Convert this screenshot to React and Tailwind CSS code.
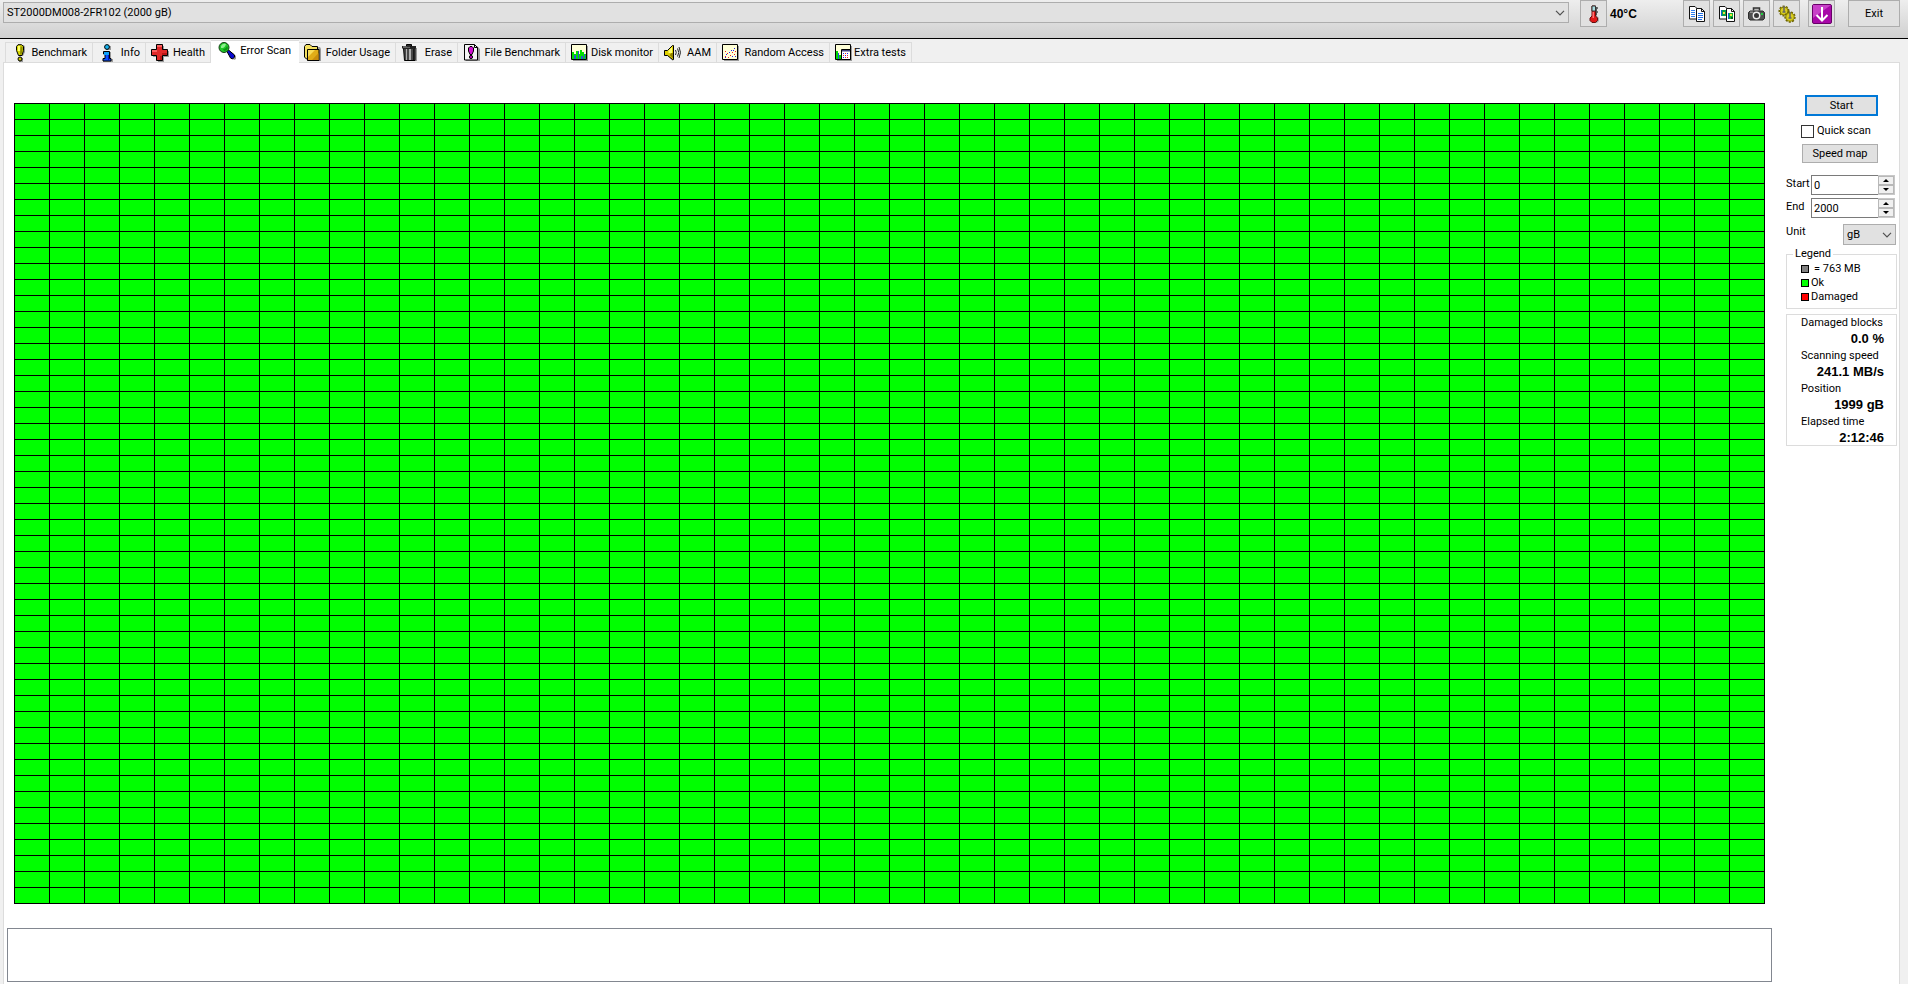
import React, { useState } from "react";

const COLUMNS = 50;
const ROWS = 50;
const BLOCKS = Array.from({ length: COLUMNS * ROWS }, (_, i) => i);

function Icon({ children, className = "h-[18px] w-[18px]" }) {
  return (
    <svg viewBox="0 0 18 18" aria-hidden="true" className={`${className} shrink-0`}>
      {children}
    </svg>
  );
}

function BenchmarkIcon() {
  return (
    <Icon>
      <path d="M6 3 8 1h4l1 2v5l-2 4H8L6 8z M7 14h4v4H7z" fill="#9a9a9a" />
      <path d="M4.500 2.500 6 .7h3.500L11.500 2.500v4L10 11.500H6.500L4.500 6.500z" fill="#d8d800" stroke="#000" />
      <path d="M6 2h2v5H6z" fill="#ffff70" />
      <path d="M8.500 2.500h2v4l-1 4H8z" fill="#8c8c00" />
      <circle cx="8" cy="15" r="2" fill="#c8c800" stroke="#000" />
    </Icon>
  );
}

function InfoIcon() {
  return (
    <Icon>
      <path d="M6 8h7v7h2v3H5v-2h2v-6H6z M8 2h5v4H8z" fill="#9a9a9a" />
      <circle cx="9" cy="3" r="2.400" fill="#18b4f0" stroke="#000" />
      <path d="M5.500 7.500h6v7h1.500v2.500H5v-2.500h2v-4.500H5.500z" fill="#0a50ff" stroke="#000" />
      <path d="M6 8h5v3H6z" fill="#10a0f8" />
      <path d="M10 11h1v5h-1z" fill="#0018c0" />
    </Icon>
  );
}

function HealthIcon() {
  return (
    <Icon>
      <path d="M7 2h6v5h5v6h-5v5H7v-5H2V7h5z" fill="#999" />
      <path d="M5.500.5h6v5h5v6h-5v5h-6v-5h-5v-6h5z" fill="#e02828" stroke="#000" />
      <path d="M6 1h5v2H6z M1 6h5v2H1z" fill="#f86060" />
      <path d="M9 12h2v4H9z M11 9h5v2h-5z" fill="#b81414" />
    </Icon>
  );
}

function ScanIcon() {
  return (
    <Icon>
      <path d="m9 10 2-2 7 6v3l-2 1z" fill="#999" />
      <path d="m9 9.500 1.500-1.500 6 5v2l-2 2-2-1z" fill="#0808d0" stroke="#000" />
      <circle cx="6" cy="5.500" r="5" fill="#20c828" stroke="#143c14" />
      <path d="M3 4q1-2.500 4-2.500l1 1Q7 5 5 6H3z" fill="#8cf08c" />
      <path d="M5 7q3 0 4-3l1 2q-1 3-4 3z" fill="#0c9414" />
    </Icon>
  );
}

function FolderIcon() {
  return (
    <Icon>
      <path d="M3 3h13l1 2v12H3z" fill="#999" />
      <path d="M.5 2.500 2 .5h4l2 2h5.500v12.500H2.500L.5 13z" fill="#f4e060" stroke="#000" />
      <path d="M3.500 5.500h11.500v11H3.500z" fill="#e0ac18" stroke="#000" />
      <path d="M4 6h7L4 13z" fill="#f8dc58" />
      <path d="M14.500 9v7H8z" fill="#c88c0c" />
    </Icon>
  );
}

function TrashIcon() {
  return (
    <Icon>
      <path d="M5 4h11v13H5z" fill="#999" />
      <path d="M2.500 4h11.500v12.500H3.500z" fill="#484848" stroke="#000" />
      <path d="M5 5h1v11H5z M8 5h2v11H8z" fill="#b0b0b0" />
      <path d="M12 5h1v11h-1z" fill="#181818" />
      <path d="M1 2h14v2.500H1z" fill="#222" />
      <path d="M2 2.500h7v1H2z" fill="#a0a0a0" />
      <path d="M5.500.5h5V2h-5z" fill="#555" stroke="#000" />
    </Icon>
  );
}

function FileBenchmarkIcon() {
  return (
    <Icon>
      <path d="M2 2h12l3 3v12H3z" fill="#999" />
      <path d="M1.500.5h10l3 3v12.500h-13z" fill="#f4f4f4" stroke="#000" />
      <path d="M11.500.5v3h3" fill="none" stroke="#000" />
      <path d="M5.500 4 7 2.500h2L10.500 4v3L9 10.500H7L5.500 7z" fill="#d010d0" stroke="#000" />
      <circle cx="8" cy="13" r="1.600" fill="#c000c0" stroke="#000" />
    </Icon>
  );
}

function MonitorIcon() {
  return (
    <Icon>
      <path d="M2 2h15v15H2z" fill="#999" />
      <path d="M.5.5h15v15H.5z" fill="#ffffd8" stroke="#000" />
      <path d="M1 8h2v2h2V7h3v3h1V6h2v2h2v2h2v5H1z" fill="#00e000" />
      <path d="M3 11h2v4H3z M7 7h1v8H7z M10 12h2v3h-2z M13 10h1v5h-1z" fill="#2858d0" />
    </Icon>
  );
}

function SpeakerIcon() {
  return (
    <Icon>
      <path d="M5 7h5v6l-1 4-5-5H2v-3z" fill="#999" />
      <path d="M.5 6.500h3L8.500 1.500h1v14h-1l-5-4h-3z" fill="#e0d000" stroke="#000" />
      <path d="M4.500 6.500 8 3v6H4.500z" fill="#ffff70" />
      <path d="M7.500 9H9v5.500L5.500 11z" fill="#908000" />
      <path d="M11.500 6q1.500 2.500 0 5M13.500 4.500q2.500 4 0 8M15 3q3 5.500 0 11" fill="none" stroke="#222" />
    </Icon>
  );
}

function RandomIcon() {
  return (
    <Icon>
      <path d="M2 2h15v15H2z" fill="#999" />
      <path d="M.5.5h15v15H.5z" fill="#ffffd8" stroke="#000" />
      <path
        d="M3 12h1v1H3z M5 9h1v1H5z M8 11h1v1H8z M10 8h1v1h-1z M12 10h1v1h-1z M6 13h1v1H6z M13 7h1v1h-1z M3 7h1v1H3z"
        fill="#f02020"
      />
      <path
        d="M4 10h1v1H4z M7 8h1v1H7z M9 6h1v1H9z M12 4h1v1h-1z M10 12h1v1h-1z M3 13h1v1H3z M13 12h1v1h-1z M11 6h1v1h-1z"
        fill="#2020f0"
      />
    </Icon>
  );
}

function ExtraIcon() {
  return (
    <Icon>
      <path d="M2 2h15v15H2z" fill="#999" />
      <path d="M.5.5h15v15H.5z" fill="#ffffd8" stroke="#000" />
      <path d="M1 7h2v8H1z M4 11h2v4H4z" fill="#00d800" />
      <path d="M3 9h1v6H3z" fill="#2050e0" />
      <path d="M6.500 5.500h9v10h-9z" fill="#fff" stroke="#000" />
      <path d="M7 6h8v1.500H7z" fill="#404080" />
      <path d="M8 9h1v1H8z M12 9h1v1h-1z M10 11h1v1h-1z M8 13h1v1H8z" fill="#2020f0" />
      <path d="M10 9h1v1h-1z M8 11h1v1H8z M12 11h1v1h-1z M10 13h1v1h-1z M12 13h1v1h-1z" fill="#f02020" />
    </Icon>
  );
}

function ThermometerIcon() {
  return (
    <Icon>
      <path d="M9 2h3v9l2 2v3l-2 2H8z" fill="#aaa" />
      <path d="M7 1h3.500v10l2 2v2.500l-2 2H7l-2-2V13l2-2z" fill="#e01818" stroke="#601010" />
      <path d="M7 1h3.500v5H7z" fill="#a8dce0" stroke="#333" />
      <path d="M7.500 7H9v6H7.500z" fill="#ff7070" />
      <path d="M11 3h2M11 5h1M11 7h2M11 9h1" stroke="#000" />
    </Icon>
  );
}

function CopyTextIcon() {
  return (
    <Icon>
      <path d="M1.500 1.500h5.500l2 2v10.500H1.500z" fill="#fff" stroke="#111" />
      <path d="M3 5.500h4M3 7.500h4M3 9.500h4M3 11.500h4" stroke="#3080f0" />
      <path d="M8.500 3.500h5l3 3v10h-8z" fill="#fff" stroke="#111" />
      <path d="M13.500 3.500v3h3" fill="none" stroke="#111" />
      <path d="M10 8.500h5M10 10.500h5M10 12.500h5M10 14.500h4" stroke="#2070e8" />
    </Icon>
  );
}

function CopyImageIcon() {
  return (
    <Icon>
      <path d="M1.500 1.500h5.500l2 2v10.500H1.500z" fill="#fff" stroke="#111" />
      <path d="M3 5h5v6H3z" fill="#08a048" />
      <path d="M3 5h1v6H3z" fill="#1060d0" />
      <path d="M5 7h2v2H5z" fill="#f0e040" />
      <path d="M8.500 3.500h5l3 3v10h-8z" fill="#fff" stroke="#111" />
      <path d="M13.500 3.500v3h3" fill="none" stroke="#111" />
      <path d="M10 8h5v6h-5z" fill="#10b830" />
      <path d="M10 8h1v6h-1z" fill="#1060d0" />
      <path d="M12 9h2v2h-2z" fill="#f0e040" />
      <path d="M13 12h2v2h-2z" fill="#086020" />
    </Icon>
  );
}

function CameraIcon() {
  return (
    <Icon>
      <path d="M5.500 5.500V3h6v2.500" fill="#bbb" stroke="#333" strokeWidth="1.500" />
      <path d="M2 6h13l1.500 1.500v6L15 15H2L.5 13.500v-6z" fill="#505050" stroke="#2c2c2c" />
      <path d="M2 6.500h3V8H2z" fill="#909090" />
      <circle cx="8.500" cy="10.500" r="3.200" fill="#383838" stroke="#eee" strokeWidth="1.400" />
      <path d="M13 8h2v2h-2z" fill="#20d040" />
    </Icon>
  );
}

function GearsIcon() {
  return (
    <Icon>
      <circle cx="6" cy="6" r="4.500" fill="none" stroke="#6c6400" strokeWidth="2" strokeDasharray="2 1.200" />
      <circle cx="6" cy="6" r="4" fill="#d8cc20" stroke="#8c8200" />
      <path d="M6 1v5.500M4.500 7h3" fill="none" stroke="#666" strokeWidth="1.500" />
      <circle cx="12" cy="12" r="4.700" fill="none" stroke="#6c6400" strokeWidth="2" strokeDasharray="2 1.200" />
      <circle cx="12" cy="12" r="4.200" fill="#d8cc20" stroke="#8c8200" />
      <path d="M12 7v5.500M10.500 13h3" fill="none" stroke="#666" strokeWidth="1.500" />
    </Icon>
  );
}

function DownIcon() {
  return (
    <svg viewBox="0 0 20 20" aria-hidden="true" className="h-5 w-5 shrink-0">
      <rect x=".5" y=".5" width="19" height="19" rx="1.500" fill="#a808a8" stroke="#680068" />
      <path d="M1 1h18L1 14z" fill="#c840c8" />
      <path d="M10 3v13M4.500 11l5.500 5.500 5.500-5.500" fill="none" stroke="#fff" strokeWidth="2" />
    </svg>
  );
}

function Chevron() {
  return (
    <svg
      viewBox="0 0 10 6"
      aria-hidden="true"
      className="pointer-events-none absolute top-1/2 right-1 h-[6px] w-[10px] -translate-y-1/2"
    >
      <path d="m1 .8 4 4 4-4" fill="none" stroke="#505050" strokeWidth="1.200" />
    </svg>
  );
}

const TABS = [
  { name: "Benchmark", icon: BenchmarkIcon, width: "w-[88px]" },
  { name: "Info", icon: InfoIcon, width: "w-[53px]" },
  { name: "Health", icon: HealthIcon, width: "w-[65px]" },
  { name: "Error Scan", icon: ScanIcon, width: "w-[88px]" },
  { name: "Folder Usage", icon: FolderIcon, width: "w-[97px]" },
  { name: "Erase", icon: TrashIcon, width: "w-[62px]" },
  { name: "File Benchmark", icon: FileBenchmarkIcon, width: "w-[108px]" },
  { name: "Disk monitor", icon: MonitorIcon, width: "w-[93px]" },
  { name: "AAM", icon: SpeakerIcon, width: "w-[58px]" },
  { name: "Random Access", icon: RandomIcon, width: "w-[113px]" },
  { name: "Extra tests", icon: ExtraIcon, width: "w-[82px]" },
];

const BUTTON = "flex items-center justify-center border border-[#adadad] bg-[#e1e1e1]";

function ToolButton({ label, children }) {
  return (
    <button type="button" aria-label={label} className={`${BUTTON} h-[27px] w-[27px] shrink-0`}>
      {children}
    </button>
  );
}

function SpinButton({ label, path, onClick }) {
  return (
    <button
      type="button"
      aria-label={label}
      onClick={onClick}
      className="flex items-center justify-center border border-[#b8b8b8] bg-[#f0f0f0]"
    >
      <svg viewBox="0 0 6 3" aria-hidden="true" className="h-[3px] w-[6px]">
        <path d={path} />
      </svg>
    </button>
  );
}

function Spinner({ id, label, value, onChange }) {
  return (
    <div className="flex items-center justify-between pr-[2px]">
      <label htmlFor={id} className="pb-[2px]">
        {label}
      </label>
      <div className="flex h-5 w-[84px] border border-[#c8c8c8] bg-white">
        <input
          id={id}
          type="text"
          inputMode="numeric"
          value={value}
          onChange={(e) => onChange(Number(e.target.value) || 0)}
          className="-my-px -ml-px h-5 w-[67px] border border-r-0 border-[#7a7a7a] pl-[2px] outline-none"
        />
        <div className="grid flex-1 grid-rows-2">
          <SpinButton label={`Increase ${label}`} path="M3 0 6 3H0z" onClick={() => onChange(value + 1)} />
          <SpinButton label={`Decrease ${label}`} path="M0 0h6L3 3z" onClick={() => onChange(Math.max(0, value - 1))} />
        </div>
      </div>
    </div>
  );
}

function Stat({ name, value }) {
  return (
    <div>
      <dt className="leading-4">{name}</dt>
      <dd className="pr-3 text-right font-['Liberation_Sans',sans-serif] text-[13px] leading-[15px] font-bold">
        {value}
      </dd>
    </div>
  );
}

export default function App() {
  const [tab, setTab] = useState("Error Scan");
  const [start, setStart] = useState(0);
  const [end, setEnd] = useState(2000);

  return (
    <div className="flex min-h-screen flex-col bg-[#f0f0f0] font-[Roboto,sans-serif] text-[11px] leading-4 text-black">
      <header className="flex h-[39px] shrink-0 items-start border-b border-black bg-linear-to-b from-[#eeeeee] to-[#d0d0d0] pr-2 pl-[3px]">
        <div className="relative mt-[2px] flex-1">
          <select
            aria-label="Drive"
            className="block h-[21px] w-full appearance-none border border-[#adadad] bg-[#e1e1e1] pl-[3px] outline-none"
          >
            <option>ST2000DM008-2FR102 (2000 gB)</option>
          </select>
          <Chevron />
        </div>
        <div className="ml-[11px] flex w-[103px] items-center gap-[3px]">
          <ToolButton label="Temperature">
            <ThermometerIcon />
          </ToolButton>
          <span className="font-['Liberation_Sans',sans-serif] text-[12px] font-bold">40°C</span>
        </div>
        <div className="flex gap-[3px]">
          <ToolButton label="Copy text">
            <CopyTextIcon />
          </ToolButton>
          <ToolButton label="Copy picture">
            <CopyImageIcon />
          </ToolButton>
          <ToolButton label="Save picture">
            <CameraIcon />
          </ToolButton>
          <ToolButton label="Options">
            <GearsIcon />
          </ToolButton>
        </div>
        <div className="mr-[13px] ml-2">
          <ToolButton label="Minimize">
            <DownIcon />
          </ToolButton>
        </div>
        <button type="button" className={`${BUTTON} h-[27px] w-[52px]`}>
          Exit
        </button>
      </header>

      <div role="tablist" className="relative z-10 -mb-px flex h-6 shrink-0 items-end pl-[5px]">
        {TABS.map(({ name, icon: TabIcon, width }) => {
          const selected = name === tab;
          return (
            <button
              key={name}
              type="button"
              role="tab"
              aria-selected={selected}
              onClick={() => setTab(name)}
              className={`${width} flex shrink-0 items-center justify-between border-[#dcdcdc] pr-[5px] pl-[5px] ${
                selected ? "h-[23px] border-t bg-white pr-[8px] pl-[7px] pb-[3px]" : "h-[21px] border border-l-0 first:border-l first:pl-[6px]"
              }`}
            >
              <TabIcon />
              <span className="whitespace-nowrap">{name}</span>
            </button>
          );
        })}
      </div>

      <main className="mr-2 ml-[3px] flex flex-1 border border-b-0 border-[#dcdcdc] bg-white">
        <div className="flex flex-1 flex-col pt-10 pb-[2px] pl-[3px]">
          <div
            role="img"
            aria-label="Scanned blocks"
            className="mx-[7px] grid grid-cols-[repeat(50,1fr)] gap-px border border-black bg-black"
          >
            {BLOCKS.map((i) => (
              <div key={i} className="h-[15px] bg-[#00ff00]" />
            ))}
          </div>
          <textarea
            aria-label="Log"
            readOnly
            className="mt-6 block min-h-[54px] w-full flex-1 resize-none border border-[#828790] bg-white outline-none"
          />
        </div>

        <aside className="w-[127px] shrink-0 pt-8 pr-[2px] pl-[14px]">
          <div className="flex flex-col items-end pr-[19px]">
            <button
              type="button"
              className="h-[21px] w-[73px] border-2 border-[#0078d7] bg-[#e1e1e1] leading-4"
            >
              Start
            </button>
            <label className="mt-[7px] flex h-4 w-[77px] items-center gap-[3px] whitespace-nowrap">
              <input
                type="checkbox"
                className="h-[13px] w-[13px] shrink-0 appearance-none border border-[#333] bg-white checked:bg-[#0078d7]"
              />
              Quick scan
            </label>
            <button type="button" className={`${BUTTON} mt-[5px] h-[19px] w-[76px]`}>
              Speed map
            </button>
          </div>

          <div className="mt-3 flex flex-col gap-[3px]">
            <Spinner id="start" label="Start" value={start} onChange={setStart} />
            <Spinner id="end" label="End" value={end} onChange={setEnd} />
          </div>

          <div className="mt-[6px] flex items-center justify-between pr-[1px]">
            <label htmlFor="unit" className="pb-[5px]">
              Unit
            </label>
            <div className="relative">
              <select
                id="unit"
                className="block h-[21px] w-[53px] appearance-none border border-[#adadad] bg-[#e1e1e1] pl-[3px] outline-none"
              >
                <option>gB</option>
                <option>mB</option>
              </select>
              <Chevron />
            </div>
          </div>

          <fieldset className="mt-[1px] border border-[#dcdcdc] pb-[4px] pl-[14px]">
            <legend className="-ml-[8px] px-[2px]">Legend</legend>
            <ul>
              {[
                ["= 763 MB", "bg-[#808080]", "gap-[5px]"],
                ["Ok", "bg-[#00ff00]", "gap-[2px]"],
                ["Damaged", "bg-[#ff0000]", "gap-[2px]"],
              ].map(([text, color, gap]) => (
                <li key={text} className={`flex h-[14px] items-center ${gap}`}>
                  <span className={`${color} h-2 w-2 border border-black`} />
                  {text}
                </li>
              ))}
            </ul>
          </fieldset>

          <dl className="mt-[5px] flex flex-col gap-[2px] border border-[#dcdcdc] pl-[14px]">
            <Stat name="Damaged blocks" value="0.0 %" />
            <Stat name="Scanning speed" value="241.1 MB/s" />
            <Stat name="Position" value="1999 gB" />
            <Stat name="Elapsed time" value="2:12:46" />
          </dl>
        </aside>
      </main>
    </div>
  );
}
